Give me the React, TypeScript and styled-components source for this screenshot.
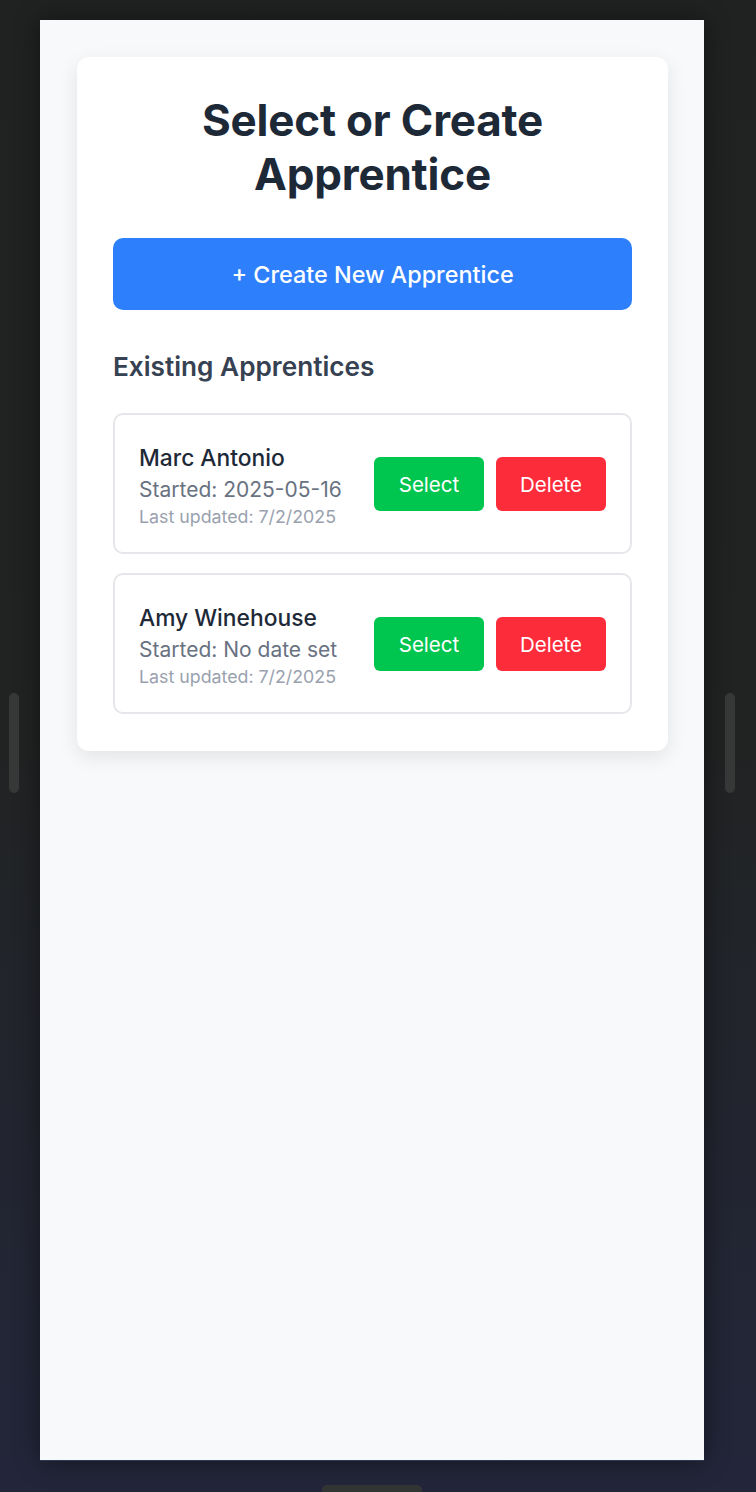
import React from "react";
import styled, { createGlobalStyle } from "styled-components";

const GlobalStyle = createGlobalStyle`
  html, body { margin: 0; padding: 0; }
  body {
    width: 756px;
    height: 1492px;
    overflow: hidden;
    background: linear-gradient(180deg, #202222 0%, #212323 50%, #22252f 75%, #23263a 100%);
    font-family: Inter, "Noto Sans", sans-serif;
  }
  * { box-sizing: border-box; }
`;

const Desktop = styled.div`
  position: relative;
  width: 756px;
  height: 1492px;
  padding: 20px 52px 0 40px;
`;

const Screen = styled.div`
  width: 664px;
  height: 1441px;
  background: #f8f9fb;
  border-bottom: 1px solid #2e3a52;
  box-shadow: 0 0 24px rgba(0, 0, 0, 0.45);
  padding: 37px 36px 0 37px;
`;

const Handle = styled.div<{ $side: "left" | "right" }>`
  position: absolute;
  top: 693px;
  ${(p) => (p.$side === "left" ? "left: 9px;" : "left: 725px;")}
  width: 10px;
  height: 100px;
  border-radius: 5px;
  background: #363837;
`;

const BottomHandle = styled.div`
  position: absolute;
  left: 322px;
  top: 1485px;
  width: 100px;
  height: 20px;
  border-radius: 5px;
  background: #333535;
`;

const Card = styled.div`
  background: #ffffff;
  border-radius: 12px;
  box-shadow: 0 6px 20px rgba(0, 0, 0, 0.09);
  padding: 36px 36px 37px;
`;

const Title = styled.h1`
  margin: 0 0 37px;
  text-align: center;
  font-size: 44px;
  line-height: 54px;
  font-weight: 700;
  color: #1e2938;
  letter-spacing: -0.2px;
`;

const PrimaryButton = styled.button`
  display: block;
  width: 100%;
  height: 72px;
  border: none;
  border-radius: 10px;
  background: #2e7ffb;
  color: #ffffff;
  font-family: inherit;
  font-size: 23.4px;
  font-weight: 500;
  cursor: pointer;
`;

const SectionTitle = styled.h2`
  margin: 41px 0 30px;
  font-size: 26.2px;
  line-height: 32px;
  font-weight: 600;
  color: #364152;
`;

const List = styled.div`
  display: flex;
  flex-direction: column;
  gap: 19px;
`;

const Item = styled.div`
  display: flex;
  align-items: center;
  justify-content: space-between;
  height: 141px;
  border: 2px solid #e6e7ea;
  border-radius: 10px;
  padding: 0 24px 0 24px;
`;

const Info = styled.div`
  display: flex;
  flex-direction: column;
  padding-top: 2px;
`;

const Name = styled.div`
  font-size: 22.8px;
  line-height: 30px;
  font-weight: 500;
  color: #1e2938;
`;

const Started = styled.div`
  font-size: 21px;
  line-height: 34px;
  color: #687281;
`;

const Updated = styled.div`
  font-size: 17.8px;
  line-height: 19px;
  color: #99a1ae;
`;

const Actions = styled.div`
  display: flex;
  gap: 12px;
  margin-top: 1px;
`;

const ActionButton = styled.button<{ $tone: "green" | "red" }>`
  width: 110px;
  height: 54px;
  border: none;
  border-radius: 6px;
  background: ${(p) => (p.$tone === "green" ? "#00c650" : "#fd2c3b")};
  color: #ffffff;
  font-family: inherit;
  font-size: 20.5px;
  font-weight: 400;
  cursor: pointer;
`;

const apprentices = [
  { name: "Marc Antonio", started: "2025-05-16", updated: "7/2/2025" },
  { name: "Amy Winehouse", started: "No date set", updated: "7/2/2025" },
];

export default function App() {
  return (
    <>
      <GlobalStyle />
      <Desktop>
        <Screen>
          <Card>
            <Title>
              Select or Create
              <br />
              Apprentice
            </Title>
            <PrimaryButton>+ Create New Apprentice</PrimaryButton>
            <SectionTitle>Existing Apprentices</SectionTitle>
            <List>
              {apprentices.map((a) => (
                <Item key={a.name}>
                  <Info>
                    <Name>{a.name}</Name>
                    <Started>Started: {a.started}</Started>
                    <Updated>Last updated: {a.updated}</Updated>
                  </Info>
                  <Actions>
                    <ActionButton $tone="green">Select</ActionButton>
                    <ActionButton $tone="red">Delete</ActionButton>
                  </Actions>
                </Item>
              ))}
            </List>
          </Card>
        </Screen>
        <Handle $side="left" />
        <Handle $side="right" />
        <BottomHandle />
      </Desktop>
    </>
  );
}
